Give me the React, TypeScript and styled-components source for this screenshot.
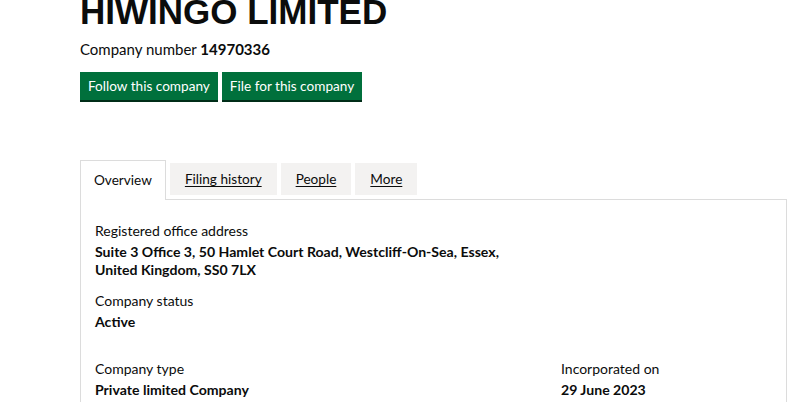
import styled, { createGlobalStyle } from "styled-components";

const GlobalStyle = createGlobalStyle`
  html, body {
    margin: 0;
    padding: 0;
    background: #ffffff;
    overflow: hidden;
  }
  body {
    font-family: Lato, "Noto Sans", Arial, sans-serif;
    color: #0b0c0c;
  }
`;

const Page = styled.div`
  padding: 0 2px 0 80px;
  width: 789px;
  height: 402px;
  box-sizing: border-box;
  overflow: hidden;
`;

const Title = styled.h1`
  margin: -6px 0 0;
  font-family: "Liberation Sans", Arial, sans-serif;
  font-size: 35px;
  line-height: 35px;
  font-weight: 700;
`;

const CompanyNumber = styled.div`
  margin-top: 10px;
  font-size: 15px;
  line-height: 20px;
  strong {
    font-weight: 700;
  }
`;

const Actions = styled.div`
  display: flex;
  gap: 4px;
  margin-top: 13px;
`;

const Button = styled.button`
  height: 28px;
  padding: 0 8px;
  border: none;
  border-radius: 0;
  background: #00703c;
  color: #ffffff;
  font-family: inherit;
  font-size: 13.6px;
  box-shadow: 0 2px 0 #002d18;
  cursor: pointer;
`;

const Tabs = styled.div`
  display: flex;
  align-items: flex-start;
  gap: 4px;
  margin-top: 60px;
  position: relative;
  z-index: 1;
`;

const Tab = styled.a<{ $active?: boolean }>`
  display: block;
  box-sizing: border-box;
  font-size: 13.6px;
  line-height: 18px;
  color: #0b0c0c;
  text-decoration: ${(p) => (p.$active ? "none" : "underline")};
  text-underline-offset: 2px;
  background: ${(p) => (p.$active ? "#ffffff" : "#f3f2f1")};
  border: ${(p) => (p.$active ? "1px solid #dcdcdc" : "none")};
  border-bottom: none;
  height: ${(p) => (p.$active ? "40px" : "32px")};
  margin-top: ${(p) => (p.$active ? "0" : "3px")};
  padding: ${(p) => (p.$active ? "10px 13px 0" : "7px 15px 0")};
`;

const Panel = styled.div`
  margin-top: -1px;
  border: 1px solid #dcdcdc;
  border-bottom: none;
  padding: 21px 14px 40px;
  height: 300px;
  box-sizing: border-box;
`;

const Grid = styled.div`
  display: grid;
  grid-template-columns: 466px 1fr;
`;

const Field = styled.div<{ $gap?: number }>`
  margin-bottom: ${(p) => p.$gap ?? 12}px;
`;

const Label = styled.div`
  font-size: 14px;
  line-height: 20px;
`;

const Value = styled.div`
  margin-top: 2px;
  font-size: 14.1px;
  line-height: 18px;
  font-weight: 700;
`;

export default function App() {
  return (
    <Page>
      <GlobalStyle />
      <Title>HIWINGO LIMITED</Title>
      <CompanyNumber>
        Company number <strong>14970336</strong>
      </CompanyNumber>
      <Actions>
        <Button>Follow this company</Button>
        <Button>File for this company</Button>
      </Actions>
      <Tabs>
        <Tab $active>Overview</Tab>
        <Tab href="#">Filing history</Tab>
        <Tab href="#">People</Tab>
        <Tab href="#">More</Tab>
      </Tabs>
      <Panel>
        <Field>
          <Label>Registered office address</Label>
          <Value>
            Suite 3 Office 3, 50 Hamlet Court Road, Westcliff-On-Sea, Essex,
            <br />
            United Kingdom, SS0 7LX
          </Value>
        </Field>
        <Field $gap={28}>
          <Label>Company status</Label>
          <Value>Active</Value>
        </Field>
        <Grid>
          <Field>
            <Label>Company type</Label>
            <Value>Private limited Company</Value>
          </Field>
          <Field>
            <Label>Incorporated on</Label>
            <Value>29 June 2023</Value>
          </Field>
        </Grid>
      </Panel>
    </Page>
  );
}
